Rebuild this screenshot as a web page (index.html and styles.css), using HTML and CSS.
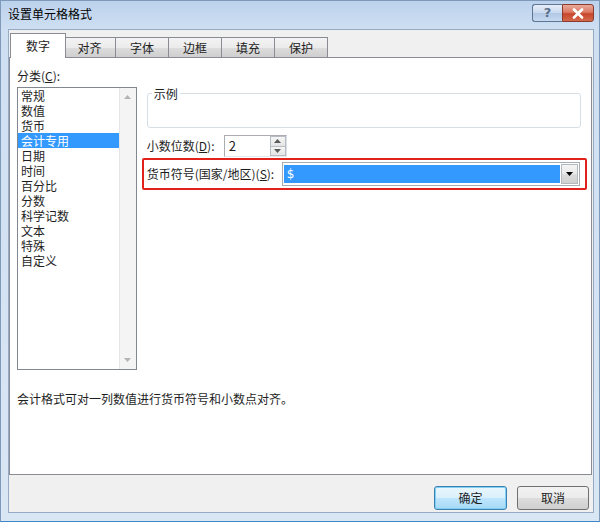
FILE: index.html
```html
<!DOCTYPE html>
<html lang="zh-CN">
<head>
<meta charset="utf-8">
<title>设置单元格格式</title>
<link rel="stylesheet" href="styles.css">
</head>
<body>
<div class="window">
  <div class="titlebar">
    <span class="title">设置单元格格式</span>
    <div class="caption-btns">
      <div class="cap-btn help"><span>?</span></div>
      <div class="cap-btn close">
        <svg width="14" height="11" viewBox="0 0 14 11"><path d="M3 1.5 L11 9.5 M11 1.5 L3 9.5" stroke="#fff" stroke-width="2.6" stroke-linecap="round"/></svg>
      </div>
    </div>
  </div>
  <div class="client">
    <div class="tabs">
      <div class="tab active">数字</div>
      <div class="tab">对齐</div>
      <div class="tab">字体</div>
      <div class="tab">边框</div>
      <div class="tab">填充</div>
      <div class="tab">保护</div>
    </div>
    <div class="panel">
      <div class="panel-body">
        <div class="left-col">
          <div class="label">分类(<u>C</u>):</div>
          <div class="listbox">
            <ul class="items">
              <li>常规</li>
              <li>数值</li>
              <li>货币</li>
              <li class="selected">会计专用</li>
              <li>日期</li>
              <li>时间</li>
              <li>百分比</li>
              <li>分数</li>
              <li>科学记数</li>
              <li>文本</li>
              <li>特殊</li>
              <li>自定义</li>
            </ul>
            <div class="scrollbar">
              <svg width="7" height="4" viewBox="0 0 7 4"><path d="M0 4 L3.5 0 L7 4 Z" fill="#b4b4b4"/></svg>
              <svg width="7" height="4" viewBox="0 0 7 4"><path d="M0 0 L3.5 4 L7 0 Z" fill="#b4b4b4"/></svg>
            </div>
          </div>
        </div>
        <div class="right-col">
          <fieldset class="sample">
            <legend>示例</legend>
            <div class="sample-body"></div>
          </fieldset>
          <div class="spin-row">
            <div class="spin-label">小数位数(<u>D</u>):</div>
            <div class="spinbox">
              <span class="spin-value">2</span>
              <div class="spin-btns">
                <div class="spin-btn"><svg width="7" height="4" viewBox="0 0 7 4"><path d="M0 4 L3.5 0 L7 4 Z" fill="#5a5a5a"/></svg></div>
                <div class="spin-btn"><svg width="7" height="4" viewBox="0 0 7 4"><path d="M0 0 L3.5 4 L7 0 Z" fill="#5a5a5a"/></svg></div>
              </div>
            </div>
          </div>
          <div class="highlight-box">
            <div class="combo-label">货币符号(国家/地区)(<u>S</u>):</div>
            <div class="combo">
              <div class="combo-value">$</div>
              <div class="combo-btn"><svg width="7" height="4" viewBox="0 0 7 4"><path d="M0 0 L3.5 4 L7 0 Z" fill="#000"/></svg></div>
            </div>
          </div>
        </div>
      </div>
      <p class="desc">会计格式可对一列数值进行货币符号和小数点对齐。</p>
    </div>
    <div class="buttons">
      <div class="btn default">确定</div>
      <div class="btn">取消</div>
    </div>
  </div>
</div>
</body>
</html>
```

FILE: styles.css
```css
* { box-sizing: border-box; }
html, body { margin: 0; padding: 0; }
body {
  width: 600px;
  height: 522px;
  overflow: hidden;
  font-family: "Noto Sans CJK SC", "Noto Sans", sans-serif;
  font-size: 12px;
  color: #1e1e1e;
}
.window {
  width: 600px;
  height: 522px;
  border: 1px solid #7f99b8;
  border-bottom-color: #3d86c6;
  background: linear-gradient(to bottom, #bcd2ec 0px, #cfdff2 30px, #d9e6f4 100%);
  padding: 0 5px 8px 7px;
  display: flex;
  flex-direction: column;
}
.titlebar {
  height: 28px;
  display: flex;
  align-items: flex-start;
  justify-content: space-between;
  flex-shrink: 0;
}
.title {
  margin-top: 5px;
  line-height: 16px;
  font-size: 12px;
  color: #000;
}
.caption-btns {
  display: flex;
  margin-top: 3px;
  margin-right: 0;
}
.cap-btn {
  height: 18px;
  border: 1px solid #5c7694;
  display: flex;
  align-items: center;
  justify-content: center;
}
.cap-btn.help {
  width: 30px;
  border-radius: 3px 0 0 3px;
  border-right: none;
  background: linear-gradient(to bottom, #e6eef8 0%, #c9d9ee 48%, #b1c8e4 52%, #c6daf0 100%);
  color: #5a6f8a;
  font-family: "DejaVu Sans", sans-serif;
  font-size: 13px;
  font-weight: bold;
}
.cap-btn.help span { line-height: 14px; }
.cap-btn.close {
  width: 32px;
  border-radius: 0 3px 3px 0;
  border-color: #8b3a2e;
  background: linear-gradient(to bottom, #e9a99b 0%, #dc7a64 45%, #c8452c 55%, #d36a4c 100%);
}
.client {
  flex: 1;
  background: #f0f0f0;
  border: 1px solid #97aac4;
  display: flex;
  flex-direction: column;
}
.tabs {
  display: flex;
  align-items: flex-end;
  height: 28px;
  padding-top: 3px;
  padding-left: 3px;
  margin-bottom: -1px;
  position: relative;
  z-index: 1;
}
.tab {
  width: 52px;
  height: 21px;
  line-height: 19px;
  text-align: center;
  border: 1px solid #898c95;
  border-left: none;
  background: linear-gradient(to bottom, #f3f3f3 0%, #ebebeb 50%, #dddddd 51%, #cfcfcf 100%);
  color: #1e1e1e;
}
.tab:nth-child(2) { border-left: none; }
.tab.active {
  width: 56px;
  height: 25px;
  line-height: 24px;
  margin: 0 -2px;
  border-left: 1px solid #898c95;
  border-bottom: none;
  background: #fff;
  position: relative;
  z-index: 2;
}
.tab:nth-child(3), .tab:nth-child(4), .tab:nth-child(5), .tab:nth-child(6) {
  width: 53px;
}
.panel {
  height: 418px;
  margin: 0 1px 0 0;
  border: 1px solid #898c95;
  background: #fff;
  padding: 10px 4px 0 7px;
  flex-shrink: 0;
}
.panel-body {
  display: flex;
  gap: 5px;
}
.left-col { width: 120px; }
.label { line-height: 15px; }
u { text-decoration: underline; text-underline-offset: 1px; }
.listbox {
  margin-top: 4px;
  height: 283px;
  border: 1px solid #828790;
  display: flex;
}
.items {
  list-style: none;
  margin: 0;
  padding: 0;
  flex: 1;
}
.items li {
  line-height: 15px;
  height: 15px;
  padding-left: 3px;
}
.items li.selected {
  background: #3399ff;
  color: #fff;
}
.scrollbar {
  width: 17px;
  background: #f4f4f4;
  border-left: 1px solid #e6e6e6;
  display: flex;
  flex-direction: column;
  justify-content: space-between;
  align-items: center;
  padding: 7px 0 7px;
}
.right-col {
  width: 446px;
}
.sample {
  margin: 18px 0 0 5px;
  width: 434px;
  padding: 0;
  border: 1px solid #d5dfe5;
  border-radius: 3px;
}
.sample legend {
  margin-left: 4px;
  padding: 0 2px;
  line-height: 15px;
  font-size: 12px;
}
.sample-body { height: 26px; }
.spin-row {
  display: flex;
  margin: 7px 0 0 5px;
  height: 22px;
}
.spin-label {
  width: 77px;
  line-height: 22px;
}
.spinbox {
  width: 63px;
  height: 22px;
  border: 1px solid #abadb3;
  border-right-color: #dbdfe6;
  border-bottom-color: #e3e9ef;
  display: flex;
  background: #fff;
}
.spin-value {
  flex: 1;
  padding-left: 4px;
  line-height: 19px;
  font-size: 13px;
}
.spin-btns {
  width: 16px;
  display: flex;
  flex-direction: column;
}
.spin-btn {
  flex: 1;
  border: 1px solid #b8bcc4;
  background: linear-gradient(to bottom, #f6f6f6, #e4e4e4);
  display: flex;
  align-items: center;
  justify-content: center;
}
.spin-btn + .spin-btn { border-top: none; }
.highlight-box {
  margin-top: 1px;
  height: 32px;
  border: 2px solid #e3211c;
  border-radius: 2px;
  padding: 2px 5px 2px 3px;
  display: flex;
}
.combo-label {
  width: 135px;
  line-height: 24px;
}
.combo {
  flex: 1;
  height: 24px;
  border: 1px solid #a5acb5;
  padding: 1px;
  display: flex;
  background: #fff;
}
.combo-value {
  flex: 1;
  margin: 1px 1px 1px 0;
  background: #3399ff;
  color: #fff;
  padding-left: 3px;
  line-height: 18px;
  font-family: "DejaVu Sans", sans-serif;
  font-size: 12px;
}
.combo-btn {
  width: 17px;
  border: 1px solid #b4b8bf;
  background: linear-gradient(to bottom, #f4f4f4 0%, #e9e9e9 50%, #dcdcdc 51%, #d0d0d0 100%);
  display: flex;
  align-items: center;
  justify-content: center;
}
.desc {
  margin: 21px 0 0 0;
  line-height: 15px;
}
.buttons {
  display: flex;
  justify-content: flex-end;
  gap: 10px;
  margin-top: 11px;
  padding-right: 4px;
}
.btn {
  width: 72px;
  height: 24px;
  border: 1px solid #707070;
  border-radius: 3px;
  background: linear-gradient(to bottom, #f2f2f2 0%, #ebebeb 50%, #dddddd 51%, #cfcfcf 100%);
  text-align: center;
  line-height: 22px;
  color: #1e1e1e;
}
.btn.default {
  width: 73px;
  border-color: #3c7fb1;
  box-shadow: inset 0 0 0 1px #7fd0f2;
  background: linear-gradient(to bottom, #eaf6fd 0%, #d9f0fc 50%, #bee6fd 51%, #a7d9f5 100%);
}
```
